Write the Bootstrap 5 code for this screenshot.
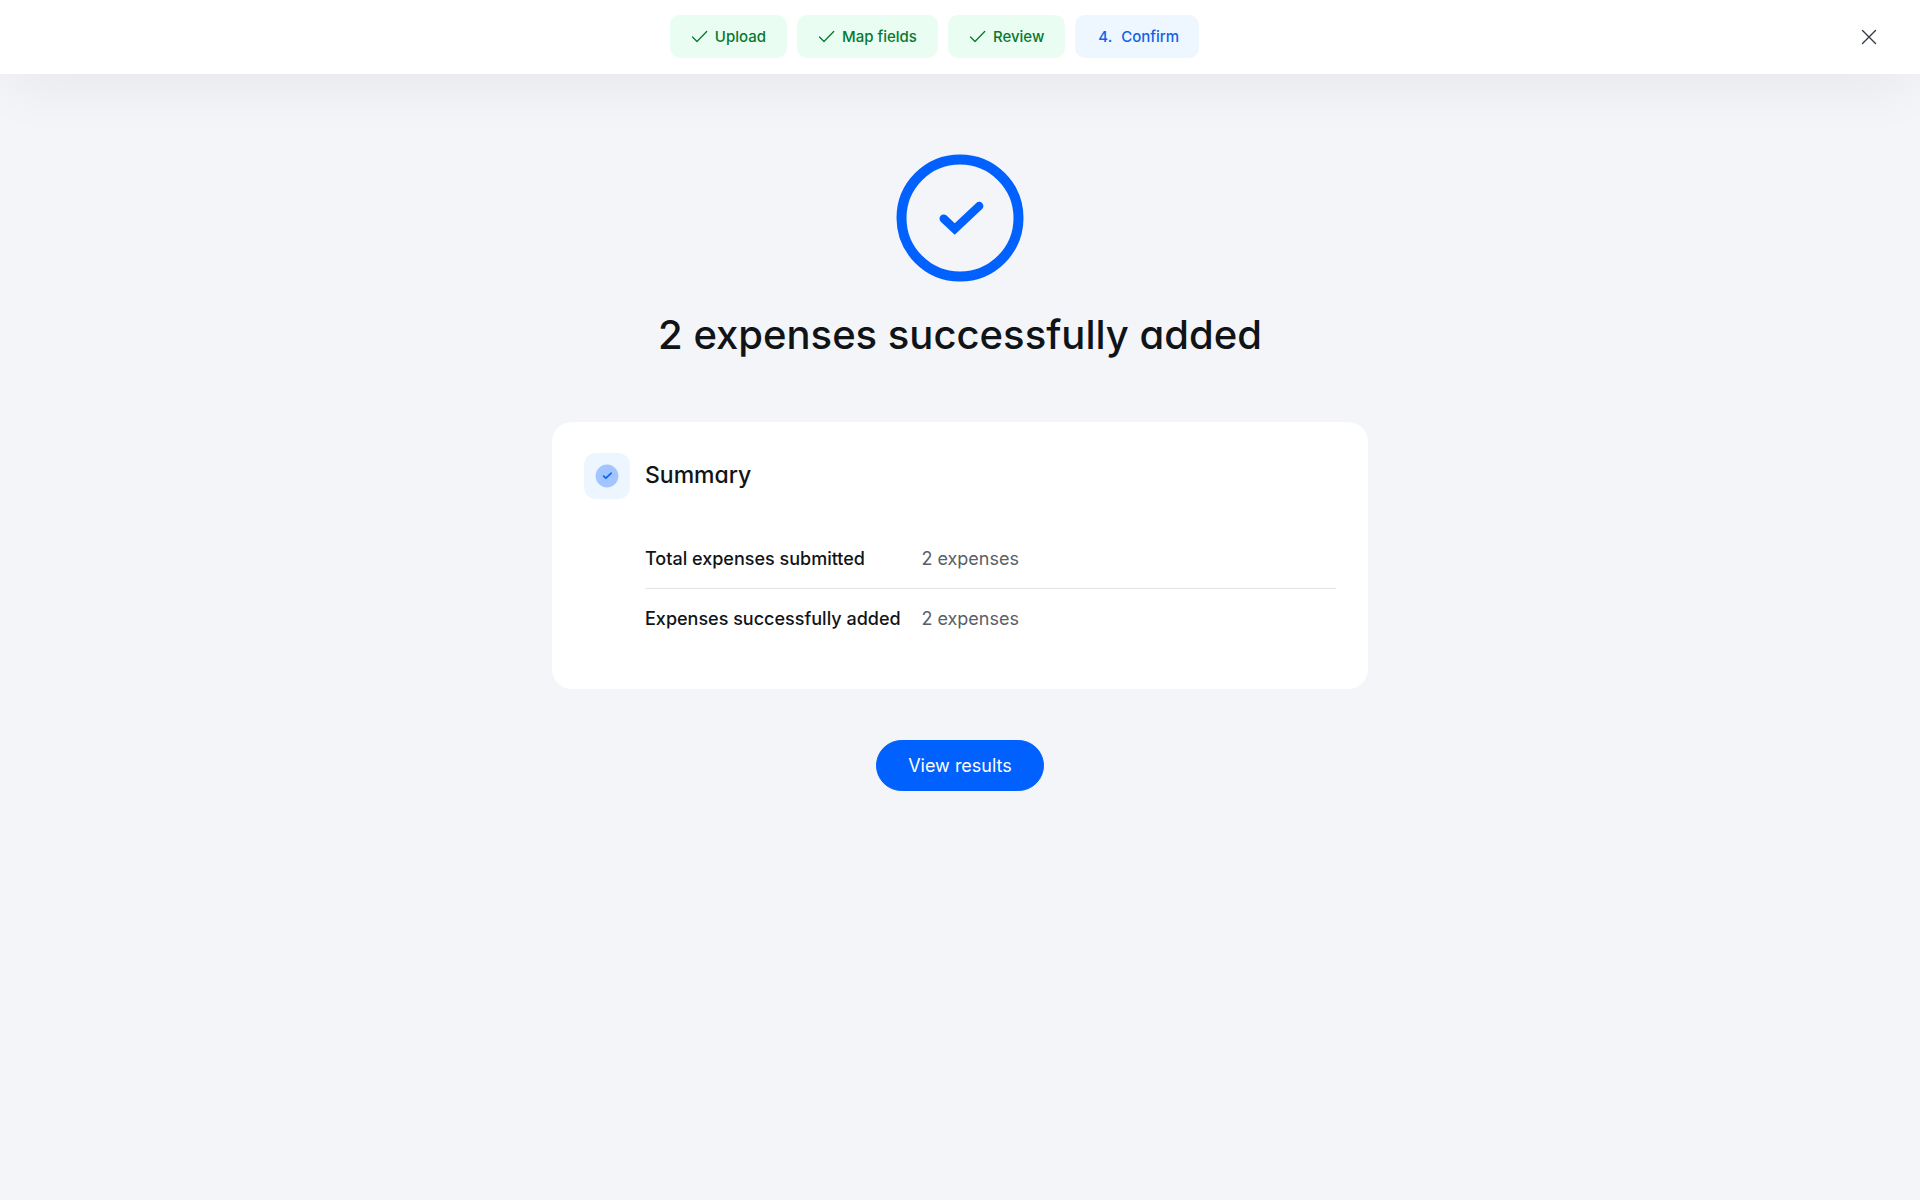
<!DOCTYPE html>
<html lang="en">
<head>
<meta charset="utf-8">
<meta name="viewport" content="width=device-width, initial-scale=1">
<title>Expenses added</title>
<link href="https://cdn.jsdelivr.net/npm/bootstrap@5.3.0/dist/css/bootstrap.min.css" rel="stylesheet">
<style>
  body { font-family: Inter, "Liberation Sans", sans-serif; background: #f3f5f9; color: #111417; }
  .topbar { padding: 15px 39px 16px 12px; box-shadow: 0 20px 56px -6px rgba(0, 0, 0, .055); }
  .steps { gap: 10px; }
  .step-pill { height: 43px; padding: 1px 21px 0 21px; gap: 7px; border-radius: 10px; font-size: 15px; font-weight: 500; text-decoration: none; background: #eafdf3; color: #08782f; }
  .step-pill.current { gap: 9px; padding: 1px 20px 0 23px; background: #eef6ff; color: #1062e6; }
  .close-btn { width: 24px; height: 24px; color: #343a46; }
  .stage { padding: 80px 16px 40px; }
  .page-title { font-size: 40px; line-height: 48px; font-weight: 500; margin: 29px 0 63px; font-feature-settings: "cv11"; }
  .summary { max-width: 816px; border-radius: 20px; padding: 31px 32px 41px; }
  .summary-icon { width: 46px; height: 46px; border-radius: 12px; background: #edf6ff; }
  .summary-head { gap: 15px; }
  .summary-title { font-size: 23px; line-height: 44px; font-weight: 500; font-feature-settings: "cv11"; }
  .summary-list { margin: 30px 0 0 61px; font-size: 18px; line-height: 27px; }
  .summary-row { padding: 16px 0; }
  .summary-row + .summary-row { border-top: 1px solid #dfe4e8; }
  .summary-row dt { flex: 0 0 40%; font-weight: 500; }
  .summary-row dd { color: #596069; }
  .results-btn { --bs-btn-bg: #0061ff; --bs-btn-border-color: #0061ff; margin-top: 51px; padding: 11px 31px; font-size: 18px; line-height: 27px; }
</style>
</head>
<body class="min-vh-100">
<header class="topbar d-flex align-items-center bg-white">
  <nav class="flex-grow-1" aria-label="Import steps">
    <ol class="steps list-unstyled d-flex justify-content-center mb-0">
      <li><a class="step-pill d-flex align-items-center" href="#"><svg width="17" height="14" viewBox="0 0 17 14" fill="none" stroke="currentColor" stroke-width="1.3" stroke-linecap="round" stroke-linejoin="round" aria-hidden="true"><path d="M1.5 7 6 11.5 15.7 1.5"/></svg>Upload</a></li>
      <li><a class="step-pill d-flex align-items-center" href="#"><svg width="17" height="14" viewBox="0 0 17 14" fill="none" stroke="currentColor" stroke-width="1.3" stroke-linecap="round" stroke-linejoin="round" aria-hidden="true"><path d="M1.5 7 6 11.5 15.7 1.5"/></svg>Map fields</a></li>
      <li><a class="step-pill d-flex align-items-center" href="#"><svg width="17" height="14" viewBox="0 0 17 14" fill="none" stroke="currentColor" stroke-width="1.3" stroke-linecap="round" stroke-linejoin="round" aria-hidden="true"><path d="M1.5 7 6 11.5 15.7 1.5"/></svg>Review</a></li>
      <li><a class="step-pill current d-flex align-items-center" href="#" aria-current="step"><span>4.</span><span>Confirm</span></a></li>
    </ol>
  </nav>
  <button type="button" class="close-btn btn p-0 border-0 d-flex" aria-label="Close"><svg width="24" height="24" viewBox="0 0 24 24" fill="none" stroke="currentColor" stroke-width="1.4" stroke-linecap="round" aria-hidden="true"><path d="M5.5 5.5l13 13M18.5 5.5l-13 13"/></svg></button>
</header>
<main class="stage d-flex flex-column align-items-center">
  <svg width="128" height="128" viewBox="0 0 128 128" fill="none" stroke="#0061ff" aria-hidden="true"><circle cx="64" cy="64" r="58.5" stroke-width="10"/><path d="M47.7 64.6 58.7 75 83.2 52" stroke-width="8.4" stroke-linecap="round"/></svg>
  <h1 class="page-title text-center">2 expenses successfully added</h1>
  <section class="summary w-100 bg-white">
    <div class="summary-head d-flex">
      <span class="summary-icon d-flex align-items-center justify-content-center"><svg width="24" height="24" viewBox="0 0 24 24" fill="none" aria-hidden="true"><circle cx="12" cy="12" r="11.4" fill="#a2c5ff"/><path d="M8.6 12.1 10.9 14.2 16.2 9.2" stroke="#0061ff" stroke-width="1.6" stroke-linecap="round"/></svg></span>
      <h2 class="summary-title mb-0">Summary</h2>
    </div>
    <dl class="summary-list">
      <div class="summary-row d-flex"><dt>Total expenses submitted</dt><dd class="mb-0">2 expenses</dd></div>
      <div class="summary-row d-flex"><dt>Expenses successfully added</dt><dd class="mb-0">2 expenses</dd></div>
    </dl>
  </section>
  <button type="button" class="results-btn btn btn-primary rounded-pill">View results</button>
</main>
<script src="https://cdn.jsdelivr.net/npm/bootstrap@5.3.0/dist/js/bootstrap.bundle.min.js"></script>
</body>
</html>
